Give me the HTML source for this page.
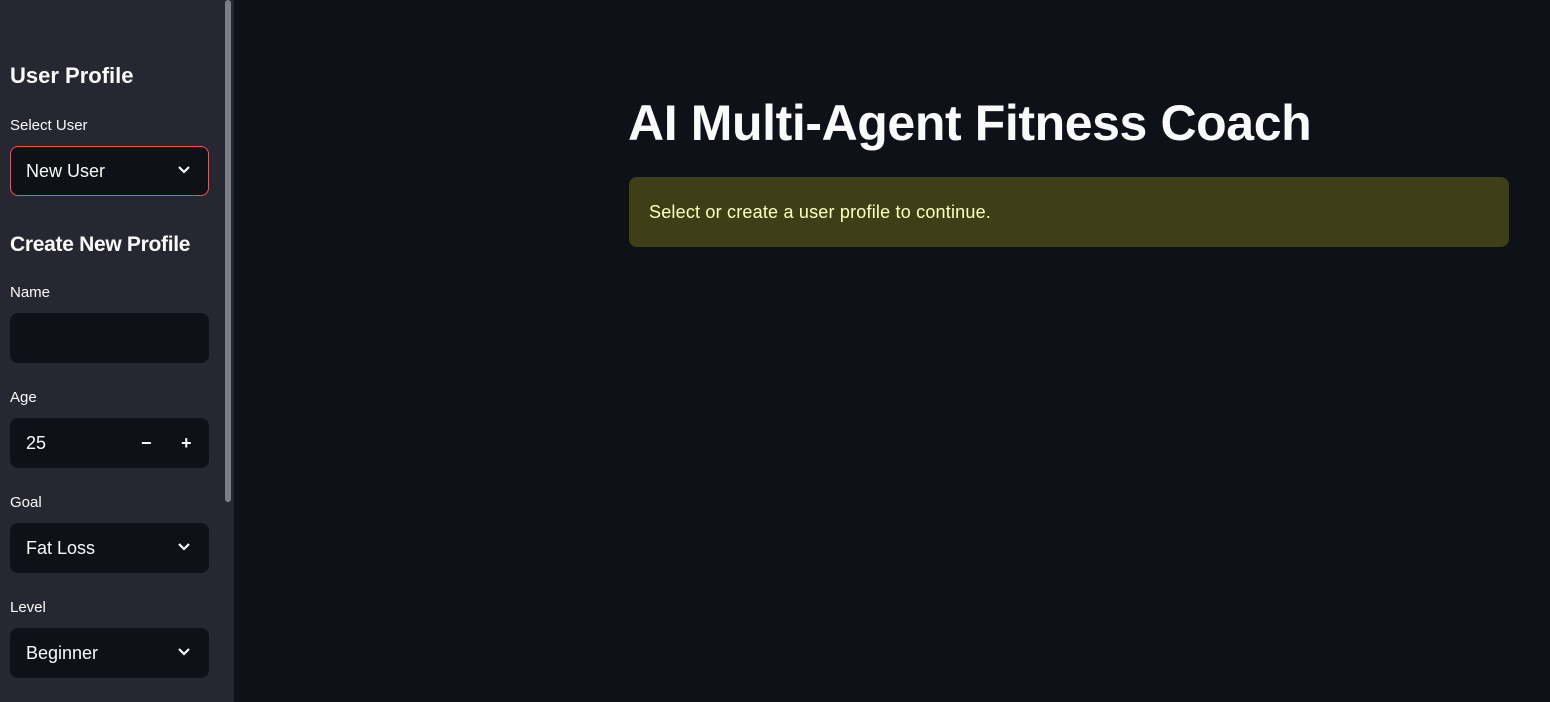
<!DOCTYPE html>
<html><head><style>
*{box-sizing:border-box;margin:0;padding:0}
body{width:1550px;height:702px;background:#0e1117;font-family:"Liberation Sans",sans-serif;color:#fafafa;position:relative;overflow:hidden}
.sb{position:absolute;left:0;top:0;width:234px;height:702px;background:#262730}
.scroll{position:absolute;left:225px;top:0;width:6px;height:502px;background:#7d7e85;border-radius:3px}
.abs{position:absolute}
h3{position:absolute;left:10px;font-size:21px;font-weight:bold}
.lbl{position:absolute;left:10px;font-size:15px}
.inp{position:absolute;left:10px;width:199px;height:50px;background:#0e1117;border-radius:8px;font-size:18px;padding-left:16px;line-height:50px}
.chev{position:absolute;right:18px;top:19px}
</style></head><body>
<div class="sb">
<div class="scroll"></div>
<h3 style="top:63px;font-size:22px">User Profile</h3>
<div class="lbl" style="top:117px">Select User</div>
<div class="inp" style="top:146px;border:1px solid #ff4b4b;line-height:48px;padding-left:15px">New User<svg class="chev" style="top:18px;right:17px" width="14" height="10" viewBox="0 0 14 10"><path d="M2 2l5 5 5-5" stroke="#fafafa" stroke-width="2.2" fill="none"/></svg></div>
<h3 style="top:233px;letter-spacing:-0.3px">Create New Profile</h3>
<div class="lbl" style="top:284px">Name</div>
<div class="inp" style="top:313px"></div>
<div class="lbl" style="top:389px">Age</div>
<div class="inp" style="top:418px">25<span class="abs" style="left:131px;top:0;font-weight:bold">−</span><span class="abs" style="left:171px;top:0;font-weight:bold">+</span></div>
<div class="lbl" style="top:494px">Goal</div>
<div class="inp" style="top:523px">Fat Loss<svg class="chev" width="14" height="10" viewBox="0 0 14 10"><path d="M2 2l5 5 5-5" stroke="#fafafa" stroke-width="2.2" fill="none"/></svg></div>
<div class="lbl" style="top:599px">Level</div>
<div class="inp" style="top:628px">Beginner<svg class="chev" width="14" height="10" viewBox="0 0 14 10"><path d="M2 2l5 5 5-5" stroke="#fafafa" stroke-width="2.2" fill="none"/></svg></div>
</div>
<div class="abs" style="left:628px;top:94px;font-size:50px;font-weight:bold;letter-spacing:-0.4px;white-space:nowrap">AI Multi-Agent Fitness Coach</div>
<div class="abs" style="left:629px;top:177px;width:880px;height:70px;background:#3e3f16;border-radius:8px;color:#ffffc2;font-size:18px;padding-left:20px;line-height:70px;letter-spacing:0.2px">Select or create a user profile to continue.</div>
</body></html>
